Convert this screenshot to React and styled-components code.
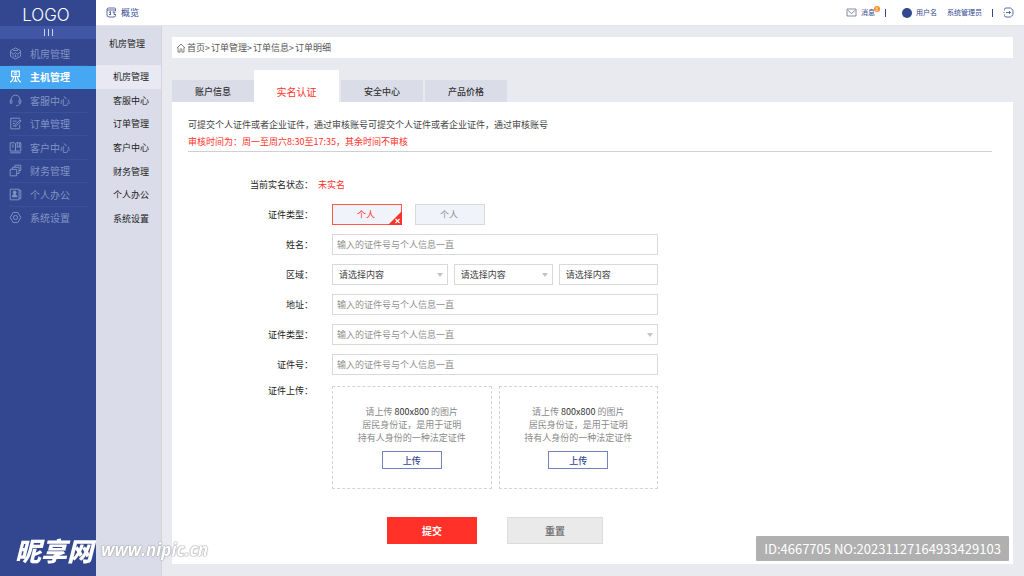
import { useState } from 'react';
import styled, { createGlobalStyle, css } from 'styled-components';

const colors = {
  navy: '#32478f',
  navyLight: '#4157a5',
  navyText: '#8294c6',
  sky: '#46a7f3',
  lilac: '#dadde9',
  page: '#e9eaf0',
  red: '#ff3129',
  border: '#d9d9dc',
};

const sideItems = [
  { label: '机房管理', icon: 'cube' },
  { label: '主机管理', icon: 'host' },
  { label: '客服中心', icon: 'headset' },
  { label: '订单管理', icon: 'order' },
  { label: '客户中心', icon: 'book' },
  { label: '财务管理', icon: 'stack' },
  { label: '个人办公', icon: 'person' },
  { label: '系统设置', icon: 'settings' },
];

const subItems = ['机房管理', '客服中心', '订单管理', '客户中心', '财务管理', '个人办公', '系统设置'];
const crumbs = ['首页', '订单管理', '订单信息', '订单明细'];
const tabs = ['账户信息', '实名认证', '安全中心', '产品价格'];
const hint = '输入的证件号与个人信息一直';

const shapes = {
  cube: <>
    <path d="M11 1.500l8.500 4.800v9.400L11 20.500l-8.500-4.800V6.300z" />
    <path d="M3 9l5 3 3-2.500L14 12l5-3M11 13v4M6 14l3 2.500M16 14l-3 2.500M7 6h8" />
  </>,
  host: <>
    <path d="M4.500 11V2h13v9zM8 5h6M8 8h6" strokeWidth="2" />
    <path d="M11 11v5M7.500 11c0 4-2 7.500-5.500 9.500M14.500 11c0 4 2 7.500 5.500 9.500M8 20c2-1 3-2 3-4 0 2 1 3 3 4" strokeWidth="2" />
  </>,
  headset: <>
    <path d="M3.500 11V9.500a7.500 7.500 0 0 1 15 0V11" />
    <path d="M3.500 10.500H2v5h3v-5zM18.500 10.500H20v5h-3v-5zM18 16c-.5 3-2.500 4-6 4" />
  </>,
  order: <>
    <path d="M18 13v7H3V2h15v2" />
    <path d="M6.500 7H13M6.500 11H10M6.500 15H9M20.500 6.500l-8 8.500-2.500 1 .5-3 8-8z" />
  </>,
  book: <>
    <path d="M2 3h7.500L11 4.500 12.500 3H20v14H2zM11 4.500V17" />
    <path d="M5 7h3M5 10h3M14 3v8l2-2 2 2V3M2 20h18" />
  </>,
  stack: <>
    <path d="M2 9h11v11H2z" />
    <path d="M6 9V5.500h11V16h-4M10 5.500V2h10v9h-3" />
  </>,
  person: <>
    <path d="M2 2h15v18H2zM17 4h3v14h-3" />
    <path d="M7 7.500a2.500 2.500 0 1 1 5 0 2.500 2.500 0 0 1-5 0zM5.500 15c.5-3 2-4 4-4s3.500 1 4 4z" fill="currentColor" />
  </>,
  settings: <>
    <path d="M7 2.500h8l5 8.500-5 8.500H7L2 11z" />
    <circle cx="11" cy="11" r="3.500" />
  </>,
  overview: <>
    <path d="M19 8V4a2 2 0 0 0-2-2H5a3 3 0 0 0-3 3v11a4 4 0 0 0 4 4h10a3 3 0 0 0 3-3v-1" />
    <path d="M2 6h17M6 11l3-2v6M13 10h6M16 10v5h4M6 15h4" />
  </>,
  mail: <path d="M2 4h18v14H2zM4 7l7 6 7-6" />,
  home: <path d="M2 11l9-8.500L20 11M4.500 10v10H9v-5.500a2 2 0 0 1 4 0V20h4.500V10" />,
  exit: <>
    <path d="M3 7V5a3 3 0 0 1 3-3h9l5 4.500v9L15 20H6a3 3 0 0 1-3-3v-2" />
    <path d="M1 11h2M6 11h9M12 8l3 3-3 3" />
  </>,
};

function Icon({ name, size = 11 }) {
  return (
    <IconSvg viewBox="0 0 22 22" width={size} height={size} aria-hidden="true">
      {shapes[name]}
    </IconSvg>
  );
}

function SelectField({ id, text, tone, arrow = true }) {
  return (
    <SelectBox>
      <Select id={id} $tone={tone} aria-label={id ? undefined : '区域'}>
        <option>{text}</option>
      </Select>
      {arrow && (
        <Arrow viewBox="0 0 6 4" aria-hidden="true">
          <path d="M0 0h6L3 4z" />
        </Arrow>
      )}
    </SelectBox>
  );
}

function Upload() {
  return (
    <UploadCard>
      <p>
        请上传 <strong>800x800</strong> 的图片<br />
        居民身份证，是用于证明<br />
        持有人身份的一种法定证件
      </p>
      <UploadButton type="button">上传</UploadButton>
    </UploadCard>
  );
}

export default function App() {
  const [tab, setTab] = useState(1);
  const [kind, setKind] = useState(0);

  return <>
    <GlobalStyle />
    <Page>
      <Sidebar>
        <Logo>LOGO</Logo>
        <Toggle type="button" aria-label="菜单"><i /><i /><i /></Toggle>
        <SideNav>
          {sideItems.map((item, i) => (
            <SideLink href="#" key={item.label} $active={i === 1}>
              <Icon name={item.icon} size={13} />
              {item.label}
            </SideLink>
          ))}
        </SideNav>
      </Sidebar>

      <Content>
        <Header>
          <HeaderTitle><Icon name="overview" />概览</HeaderTitle>
          <HeaderTools>
            <Message href="#"><Icon name="mail" />消息<Badge>8</Badge></Message>
            <Divider />
            <User><Avatar />用户名</User>
            <span>系统管理员</span>
            <Divider />
            <ExitButton type="button" aria-label="退出"><Icon name="exit" /></ExitButton>
          </HeaderTools>
        </Header>

        <Body>
          <SubPanel>
            <SubTitle>机房管理</SubTitle>
            <SubNav>
              {subItems.map((label, i) => (
                <SubLink href="#" key={label} $active={i === 0}>{label}</SubLink>
              ))}
            </SubNav>
          </SubPanel>

          <Main>
            <Breadcrumb>
              <Icon name="home" size={10} />
              {crumbs.map((label, i) => (
                <span key={label}><a href="#">{label}</a>{i < crumbs.length - 1 && '>'}</span>
              ))}
            </Breadcrumb>

            <TabBar>
              {tabs.map((label, i) => (
                <Tab type="button" key={label} $active={i === tab} onClick={() => setTab(i)}>{label}</Tab>
              ))}
            </TabBar>

            <Panel>
              <Notice>
                <p>可提交个人证件或者企业证件，通过审核账号可提交个人证件或者企业证件，通过审核账号</p>
                <Warning>审核时间为：周一至周六8:30至17:35，其余时间不审核</Warning>
              </Notice>

              <Form onSubmit={(e) => e.preventDefault()}>
                <Row $tight>
                  <Label as="span">当前实名状态：</Label>
                  <Status>未实名</Status>
                </Row>
                <Row>
                  <Label as="span">证件类型：</Label>
                  <Options>
                    {[0, 1].map((i) => (
                      <Option key={i} $active={kind === i}>
                        <input type="radio" name="kind" checked={kind === i} onChange={() => setKind(i)} />
                        个人
                        {kind === i && (
                          <Corner viewBox="0 0 14 14" aria-hidden="true">
                            <path d="M14 0v14H0z" />
                            <path d="M7.500 8l4 4M11.500 8l-4 4" />
                          </Corner>
                        )}
                      </Option>
                    ))}
                  </Options>
                </Row>
                <Row>
                  <Label htmlFor="name">姓名：</Label>
                  <Input id="name" placeholder={hint} />
                </Row>
                <Row>
                  <Label htmlFor="area">区域：</Label>
                  <Areas>
                    <SelectField id="area" text="请选择内容" />
                    <SelectField text="请选择内容" />
                    <SelectField text="请选择内容" arrow={false} />
                  </Areas>
                </Row>
                <Row>
                  <Label htmlFor="address">地址：</Label>
                  <Input id="address" placeholder={hint} />
                </Row>
                <Row>
                  <Label htmlFor="cardType">证件类型：</Label>
                  <SelectField id="cardType" text={hint} tone="hint" />
                </Row>
                <Row>
                  <Label htmlFor="cardNo">证件号：</Label>
                  <Input id="cardNo" placeholder={hint} />
                </Row>
                <Row $top>
                  <Label as="span">证件上传：</Label>
                  <Uploads>
                    <Upload />
                    <Upload />
                  </Uploads>
                </Row>
                <Actions>
                  <Submit type="submit">提交</Submit>
                  <Reset type="reset">重置</Reset>
                </Actions>
              </Form>
            </Panel>
          </Main>
        </Body>
      </Content>

      <Brand><b>昵享网</b><span>www.nipic.cn</span></Brand>
      <Serial>ID:4667705 NO:20231127164933429103</Serial>
    </Page>
  </>;
}

const GlobalStyle = createGlobalStyle`
  * { box-sizing: border-box; }
  body {
    margin: 0;
    background: ${colors.page};
    color: #444;
    font: 9px/13px "Noto Sans CJK SC", sans-serif;
  }
  p { margin: 0; }
  a { color: inherit; text-decoration: none; }
  button, input, select { font: inherit; color: inherit; margin: 0; border-radius: 0; }
  button { padding: 0; border: 0; background: none; cursor: pointer; }
`;

const IconSvg = styled.svg`
  flex: none;
  fill: none;
  stroke: currentColor;
  stroke-width: 1.6;
  stroke-linejoin: round;
`;

const Page = styled.div`
  display: flex;
  min-height: 100vh;
`;

const Sidebar = styled.aside`
  flex: none;
  width: 96px;
  background: ${colors.navy};
`;

const Logo = styled.div`
  height: 26px;
  padding-top: 2px;
  color: #fff;
  font: 300 17px/26px Inter, sans-serif;
  text-align: center;
  padding-right: 4px;
`;

const Toggle = styled.button`
  display: flex;
  justify-content: center;
  align-items: center;
  gap: 3px;
  width: 100%;
  height: 13px;
  background: ${colors.navyLight};

  i {
    width: 1px;
    height: 7px;
    background: #c9d2ee;
  }
`;

const SideNav = styled.nav`
  display: grid;
  grid-template-rows: repeat(8, 1fr);
  height: 191px;
  padding-top: 3px;
`;

const SideLink = styled.a`
  display: flex;
  align-items: center;
  gap: 8px;
  padding: 0 0 1px 9px;
  color: ${colors.navyText};
  font-size: 10px;
  background: linear-gradient(#3b5099, #3b5099) 9px 100% / 78px 1px no-repeat;

  ${(p) => p.$active && css`
    color: #fff;
    font-weight: 700;
    background: ${colors.sky};
  `}

  &:last-child { background: none; }
`;

const Content = styled.div`
  flex: 1;
  display: flex;
  flex-direction: column;
  min-width: 0;
`;

const Header = styled.header`
  display: flex;
  justify-content: space-between;
  align-items: center;
  height: 26px;
  padding: 0 10px;
  color: ${colors.navy};
  background: #fff;
  border-bottom: 1px solid #e2e4ea;
`;

const HeaderTitle = styled.div`
  display: flex;
  align-items: center;
  gap: 4px;
`;

const HeaderTools = styled.div`
  display: flex;
  align-items: center;
  gap: 10px;
  font-size: 7px;
`;

const Message = styled.a`
  position: relative;
  display: flex;
  align-items: center;
  gap: 4px;

  svg { color: #666e8c; }
`;

const Badge = styled.span`
  position: absolute;
  top: 0;
  right: -5px;
  width: 6px;
  height: 6px;
  border-radius: 50%;
  color: #fff;
  background: #ff8a1f;
  font-size: 5px;
  line-height: 6px;
  text-align: center;
`;

const Divider = styled.span`
  width: 1px;
  height: 8px;
  background: ${colors.navy};
`;

const User = styled.span`
  display: flex;
  align-items: center;
  gap: 4px;
  margin-left: 6px;
`;

const Avatar = styled.span`
  width: 10px;
  height: 10px;
  border-radius: 50%;
  background: ${colors.navy};
`;

const ExitButton = styled.button`
  display: flex;
`;

const Body = styled.div`
  flex: 1;
  display: flex;
`;

const SubPanel = styled.aside`
  flex: none;
  width: 66px;
  background: ${colors.lilac};
  border-right: 1px solid #d3d5de;
  color: #222;
`;

const SubTitle = styled.div`
  height: 39px;
  padding-left: 13px;
  line-height: 36px;
`;

const SubNav = styled.nav`
  display: grid;
  grid-template-rows: repeat(7, 1fr);
  height: 165px;
`;

const SubLink = styled.a`
  display: flex;
  align-items: center;
  padding-left: 17px;
  background: ${(p) => (p.$active ? '#e8e9f2' : 'transparent')};
`;

const Main = styled.main`
  flex: 1;
  display: flex;
  flex-direction: column;
  min-width: 0;
  padding: 11px 11px 12px 10px;
`;

const Breadcrumb = styled.nav`
  display: flex;
  align-items: center;
  gap: 1px;
  height: 21px;
  padding-left: 4px;
  color: #555;
  background: #fff;
`;

const TabBar = styled.div`
  display: flex;
  align-items: flex-end;
  gap: 2px;
  height: 44px;
`;

const Tab = styled.button`
  width: 82px;
  height: 22px;
  color: #333;
  background: #dadce8;
  font-weight: 500;

  ${(p) => p.$active && css`
    width: 85px;
    height: 32px;
    margin-left: -2px;
    padding-top: 10px;
    color: ${colors.red};
    background: #fff;
    font-size: 10px;
    font-weight: 400;
  `}
`;

const Panel = styled.section`
  flex: 1;
  padding: 14px 21px 20px 16px;
  background: #fff;
`;

const Notice = styled.div`
  padding-bottom: 1px;
  border-bottom: 1px solid #d0d0d4;
  line-height: 17px;
`;

const Warning = styled.p`
  color: ${colors.red};
`;

const Form = styled.form`
  display: flex;
  flex-direction: column;
  gap: 9px;
  max-width: 470px;
  padding-top: 22px;
`;

const Row = styled.div`
  display: grid;
  grid-template-columns: 125px 1fr;
  align-items: ${(p) => (p.$top ? 'start' : 'center')};
  column-gap: ${(p) => (p.$tight ? 5 : 19)}px;
  min-height: 21px;
`;

const Label = styled.label`
  color: #222;
  text-align: right;
`;

const Status = styled.span`
  color: ${colors.red};
`;

const field = css`
  display: block;
  width: 100%;
  height: 21px;
  padding: 0 4px;
  background: #fff;
  border: 1px solid ${colors.border};
  outline: 0;
`;

const Input = styled.input`
  ${field}
  &::placeholder { color: #8f8f8f; opacity: 1; }
`;

const SelectBox = styled.div`
  position: relative;
`;

const Select = styled.select`
  ${field}
  appearance: none;
  padding-left: ${(p) => (p.$tone === 'hint' ? 4 : 6)}px;
  color: ${(p) => (p.$tone === 'hint' ? '#8f8f8f' : '#444')};
`;

const Arrow = styled.svg`
  position: absolute;
  top: 9px;
  right: 5px;
  width: 6px;
  height: 4px;
  fill: #c4c4c8;
  pointer-events: none;
`;

const Areas = styled.div`
  display: grid;
  grid-template-columns: 7fr 6fr 6fr;
  gap: 6px;
`;

const Options = styled.div`
  display: flex;
  gap: 13px;
`;

const Option = styled.label`
  position: relative;
  width: 70px;
  height: 21px;
  line-height: 20px;
  text-align: center;
  padding-right: 2px;
  color: ${(p) => (p.$active ? colors.red : '#8f8f8f')};
  background: #f0f3f9;
  border: 1px solid ${(p) => (p.$active ? '#ff5650' : colors.border)};
  cursor: pointer;

  input {
    position: absolute;
    opacity: 0;
  }
`;

const Corner = styled.svg`
  position: absolute;
  right: -1px;
  bottom: -1px;
  width: 14px;
  height: 14px;
  fill: ${colors.red};

  path + path {
    stroke: #fff;
    stroke-width: 1.2;
  }
`;

const Uploads = styled.div`
  display: grid;
  grid-template-columns: 1fr 1fr;
  gap: 7px;
  padding-top: 2px;
`;

const UploadCard = styled.div`
  display: flex;
  flex-direction: column;
  align-items: center;
  gap: 7px;
  height: 103px;
  padding-top: 18px;
  color: #8a8a8a;
  text-align: center;
  border: 1px dashed #d4d4d8;

  strong {
    color: #333;
    font-weight: 400;
  }
`;

const UploadButton = styled.button`
  width: 60px;
  height: 18px;
  color: ${colors.navy};
  border: 1px solid #7182c0;
  font-weight: 500;
`;

const Actions = styled.div`
  display: flex;
  gap: 30px;
  padding: 19px 0 0 199px;
`;

const Submit = styled.button`
  width: 90px;
  height: 27px;
  color: #fff;
  background: ${colors.red};
  font-size: 10px;
  font-weight: 700;
`;

const Reset = styled(Submit)`
  width: 96px;
  color: #777;
  background: #eaeaea;
  border: 1px solid #dcdcdc;
`;

const Brand = styled.div`
  position: fixed;
  left: 15px;
  bottom: 12px;
  display: flex;
  align-items: center;
  gap: 8px;
  color: #fff;
  font-style: italic;
  line-height: 28px;
  white-space: nowrap;

  b {
    font-size: 26px;
    font-weight: 900;
  }

  span {
    font-family: "Open Sans", sans-serif;
    font-size: 17px;
    font-weight: 700;
    text-shadow: 0 0 1px #999, 0 0 1px #999, 0 0 2px #aaa;
  }
`;

const Serial = styled.div`
  position: fixed;
  right: 15px;
  bottom: 15px;
  width: 253px;
  border-radius: 1px;
  color: #fff;
  background: #b0b0b0;
  font-size: 13px;
  line-height: 25px;
  text-align: center;
  white-space: nowrap;
`;
